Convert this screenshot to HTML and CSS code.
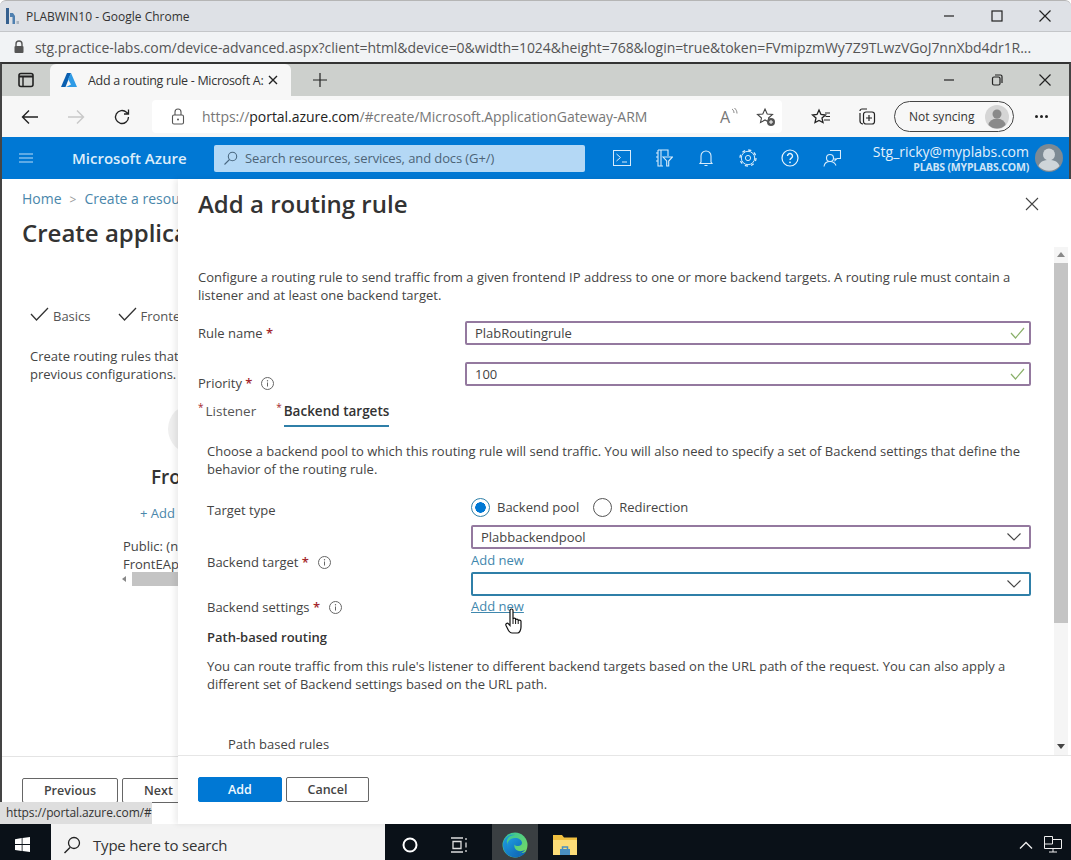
FILE: index.html
```html
<!DOCTYPE html>
<html lang="en">
<head>
    <meta charset="UTF-8">
    <title>Add a routing rule - Microsoft Azure</title>
    <link rel="stylesheet" href="styles.css">
</head>
<body>
<div class="screen">
    <div class="outerTitle">
        <svg class="labIcon" width="14" height="20" viewBox="0 0 14 20"><path d="M1 2h3v16H1z" fill="#35608f"/><path d="M5 7h3l2 3v8H7.500v-7H5z" fill="#4f80b0"/><path d="M11.500 15H14v3h-2.500z" fill="#aab4bf"/></svg>
        <span class="outerName">PLABWIN10 - Google Chrome</span>
        <div class="winButtons">
            <svg width="16" height="16" viewBox="0 0 16 16"><path d="M3 8h10" stroke="#222" stroke-width="1.2"/></svg>
            <svg width="16" height="16" viewBox="0 0 16 16"><rect x="3" y="3" width="10" height="10" fill="none" stroke="#222" stroke-width="1.2"/></svg>
            <svg width="16" height="16" viewBox="0 0 16 16"><path d="M2.500 2.500l11 11M13.500 2.500l-11 11" stroke="#222" stroke-width="1.2"/></svg>
        </div>
    </div>
    <div class="outerAddress">
        <svg width="12" height="14" viewBox="0 0 12 14"><path d="M3 6V4a3 3 0 0 1 6 0v2" fill="none" stroke="#555" stroke-width="1.4"/><rect x="1.500" y="6" width="9" height="7" rx="1" fill="#555"/></svg>
        <span class="outerUrl">stg.practice-labs.com/device-advanced.aspx?client=html&amp;device=0&amp;width=1024&amp;height=768&amp;login=true&amp;token=FVmipzmWy7Z9TLwzVGoJ7nnXbd4dr1R...</span>
    </div>

    <div class="browser">
        <div class="tabStrip">
            <svg class="sideIcon" width="16" height="16" viewBox="0 0 16 16"><rect x="1" y="1.500" width="14" height="13" rx="2" fill="none" stroke="#222" stroke-width="1.6"/><path d="M1 4.500h14" stroke="#222" stroke-width="2"/><path d="M5 4.500v10" stroke="#222" stroke-width="1.4"/></svg>
            <div class="tab">
                <svg width="16" height="14" viewBox="0 0 16 14"><path d="M6 0h4L4.500 14H0z" fill="#0a5fb0"/><path d="M10 0l6 14H5l5-2.500L7 6z" fill="#2f9be6"/></svg>
                <span class="tabTitle">Add a routing rule - Microsoft A:</span>
                <svg width="10" height="10" viewBox="0 0 10 10"><path d="M1 1l8 8M9 1L1 9" stroke="#222" stroke-width="1.4"/></svg>
            </div>
            <svg class="plusIcon" width="14" height="14" viewBox="0 0 14 14"><path d="M7 0v14M0 7h14" stroke="#222" stroke-width="1.2"/></svg>
            <div class="winButtons">
                <svg width="16" height="16" viewBox="0 0 16 16"><path d="M3 8h10" stroke="#222" stroke-width="1.2"/></svg>
                <svg width="16" height="16" viewBox="0 0 16 16"><rect x="3.500" y="5" width="7.500" height="8" rx="1.500" fill="none" stroke="#222" stroke-width="1.2"/><path d="M6 3h5.500a1.500 1.500 0 0 1 1.500 1.500V11" fill="none" stroke="#222" stroke-width="1.2"/></svg>
                <svg width="16" height="16" viewBox="0 0 16 16"><path d="M2.500 2.500l11 11M13.500 2.500l-11 11" stroke="#222" stroke-width="1.2"/></svg>
            </div>
        </div>

        <div class="toolbar">
            <svg class="navIcon" width="18" height="16" viewBox="0 0 18 16"><path d="M17 8H1.500M8 1.500L1.500 8 8 14.500" fill="none" stroke="#222" stroke-width="1.400"/></svg>
            <svg class="navIcon" width="18" height="16" viewBox="0 0 18 16"><path d="M1 8h15.500M10 1.500L16.500 8 10 14.500" fill="none" stroke="#c9c9c9" stroke-width="1.400"/></svg>
            <svg class="navIcon" width="18" height="18" viewBox="0 0 18 18"><path d="M15.500 9a6.500 6.500 0 1 1-2-4.700L15.500 6M15.500 1.500V6H11" fill="none" stroke="#222" stroke-width="1.300"/></svg>
            <div class="urlBox">
                <svg width="14" height="17" viewBox="0 0 14 17"><path d="M4 7V4a3 3 0 0 1 6 0v3" fill="none" stroke="#555" stroke-width="1.100"/><rect x="1.500" y="7" width="11" height="9" rx="1.500" fill="none" stroke="#555" stroke-width="1.100"/><circle cx="7" cy="11.500" r="1" fill="#555"/></svg>
                <span class="urlText">https://<b>portal.azure.com</b>/#create/Microsoft.ApplicationGateway-ARM</span>
                <span class="readAloud">A</span>
                <svg class="readWaves" width="7" height="12" viewBox="0 0 7 12"><path d="M1 1c1.500 1 2 2.500 2 4M3.500 0C5 1.500 6 3 6 5.500" fill="none" stroke="#888"/></svg>
                <svg class="favAdd" width="20" height="20" viewBox="0 0 20 20"><path d="M9 2l2.200 5 5.300.5-4 3.500 1 4.500-4.500-2.500L4.500 15.500l1-4.500-4-3.500L6.800 7z" fill="none" stroke="#444" stroke-width="1.100"/><circle cx="15" cy="15" r="4" fill="#555"/><path d="M15 13v4M13 15h4" stroke="#fff"/></svg>
            </div>
            <svg class="toolIcon favIcon" width="20" height="18" viewBox="0 0 20 18"><path d="M8 2l2 4.500 4.500.5-3.500 3 1 4.500L8 12.500 4 14.500l1-4.500-3.500-3 4.500-.5z" fill="none" stroke="#222" stroke-width="1.300"/><path d="M14 5h5M14.500 8.500h4.500M13 12h6" stroke="#222" stroke-width="1.100"/></svg>
            <svg class="toolIcon" width="20" height="20" viewBox="0 0 20 20"><path d="M6 17a3 3 0 0 1-3-3V6M3 4a2 2 0 0 1 2-2h5" fill="none" stroke="#222" stroke-width="1.200"/><rect x="6.500" y="5" width="11" height="12" rx="2.500" fill="none" stroke="#222" stroke-width="1.200"/><path d="M12 8v6M9 11h6" stroke="#222" stroke-width="1.200"/></svg>
            <div class="syncPill">
                <span>Not syncing</span>
                <svg width="24" height="24" viewBox="0 0 24 24"><circle cx="12" cy="12" r="12" fill="#d5d5d5"/><circle cx="12" cy="9" r="4.500" fill="#8a8a8a"/><path d="M3.500 20a8.500 6.500 0 0 1 17 0 12 12 0 0 1-17 0z" fill="#8a8a8a"/></svg>
            </div>
            <div class="moreDots"><i></i><i></i><i></i></div>
        </div>

        <div class="portalBar">
            <svg class="burger" width="14" height="10" viewBox="0 0 14 10"><path d="M0 1h14M0 5h14M0 9h14" stroke="#bcdcf5" stroke-width="1.200"/></svg>
            <span class="brand">Microsoft Azure</span>
            <div class="portalSearch">
                <svg width="15" height="15" viewBox="0 0 15 15"><circle cx="9.500" cy="5.500" r="4.200" fill="none" stroke="#4a6880" stroke-width="1.100"/><path d="M6.500 8.500L1.500 13.500" stroke="#4a6880" stroke-width="1.100"/></svg>
                <span>Search resources, services, and docs (G+/)</span>
            </div>
            <div class="portalIcons">
                <svg width="18" height="16" viewBox="0 0 18 16"><rect x=".5" y=".5" width="17" height="15" fill="none" stroke="#d8ecfb"/><path d="M3.500 4l4 3.500-4 3.500M9 12h5" fill="none" stroke="#d8ecfb"/></svg>
                <svg width="18" height="18" viewBox="0 0 18 18"><path d="M3 1h10v6M8 17H3V1M1 4h2M1 8h2M1 12h2M6 1v16" fill="none" stroke="#d8ecfb" stroke-width="1.100"/><path d="M8 8h9.500l-3.800 4v5h-2v-5z" fill="none" stroke="#d8ecfb" stroke-width="1.100"/></svg>
                <svg width="18" height="18" viewBox="-2 0 18 18"><path d="M2 13V7a5 5 0 0 1 10 0v6l1 1.500H1zM5.500 16.500h3" fill="none" stroke="#d8ecfb" stroke-width="1.100"/></svg>
                <svg width="18" height="18" viewBox="0 0 18 18"><circle cx="9" cy="9" r="8" fill="none" stroke="#d8ecfb" stroke-width="1.300" stroke-dasharray="3.140 3.140"/><circle cx="9" cy="9" r="6.700" fill="#0078d4" stroke="#d8ecfb" stroke-width="1"/><circle cx="9" cy="9" r="2.600" fill="none" stroke="#d8ecfb" stroke-width="1"/></svg>
                <svg width="18" height="18" viewBox="0 0 18 18"><circle cx="9" cy="9" r="8" fill="none" stroke="#e8f4fd" stroke-width="1.200"/><path d="M6.500 7a2.500 2.500 0 1 1 3.800 2.100C9.400 9.700 9 10.200 9 11" fill="none" stroke="#e8f4fd" stroke-width="1.400"/><circle cx="9" cy="13.300" r=".9" fill="#e8f4fd"/></svg>
                <svg width="18" height="18" viewBox="0 0 18 18"><circle cx="7" cy="9" r="3.500" fill="none" stroke="#d8ecfb" stroke-width="1.100"/><path d="M1 17.500c.5-3.500 3-5 6-5s5 1.500 6 4M7 1.500h10.500v8h-3.500l-2 2V9" fill="none" stroke="#d8ecfb" stroke-width="1.100"/></svg>
            </div>
            <div class="account">
                <span class="accountMail">Stg_ricky@myplabs.com</span>
                <span class="accountOrg">PLABS (MYPLABS.COM)</span>
            </div>
            <svg class="avatar" width="28" height="28" viewBox="0 0 28 28"><circle cx="14" cy="14" r="14" fill="#7d8a94"/><circle cx="14" cy="10.500" r="6" fill="#cfd5d9"/><path d="M3.500 22c1.500-4.500 5.500-6 10.500-6s9 1.500 10.500 6a14 14 0 0 1-21 0z" fill="#cfd5d9"/></svg>
        </div>

        <div class="portalMain">
            <div class="blade">
                <div class="crumbs"><a>Home</a><span class="crumbSep">&gt;</span><a>Create a resou</a></div>
                <h1 class="bladeTitle">Create applica</h1>
                <div class="steps">
                    <span class="step"><svg width="19" height="14" viewBox="0 0 19 14"><path d="M1 7l5.500 6L18 1" fill="none" stroke="#333" stroke-width="1.300"/></svg>Basics</span>
                    <span class="step"><svg width="19" height="14" viewBox="0 0 19 14"><path d="M1 7l5.500 6L18 1" fill="none" stroke="#333" stroke-width="1.300"/></svg>Fronte</span>
                </div>
                <p class="bladeText">Create routing rules that<br>previous configurations.</p>
                <div class="bladeCircle"></div>
                <div class="bladeCol">
                    <div class="colTitle">Fro</div>
                    <div class="colAdd">+ Add</div>
                    <div class="colItem">Public: (n<br>FrontEAp</div>
                    <div class="colScroll"><span class="colArrow"></span><span class="colThumb"></span></div>
                </div>
                <div class="bladeFooter">
                    <button class="btn">Previous</button>
                    <button class="btn btnNext">Next</button>
                </div>
            </div>

            <div class="panel">
                <div class="panelHead">
                    <h2>Add a routing rule</h2>
                    <svg width="14" height="14" viewBox="0 0 14 14"><path d="M1 1l12 12M13 1L1 13" stroke="#444" stroke-width="1.100"/></svg>
                </div>
                <div class="panelBody">
                    <div class="panelScroll">
                        <p class="intro">Configure a routing rule to send traffic from a given frontend IP address to one or more backend targets. A routing rule must contain a listener and at least one backend target.</p>

                        <div class="formRow ruleRow">
                            <label>Rule name <em>*</em></label>
                            <div class="field valid"><span>PlabRoutingrule</span><svg width="15" height="12" viewBox="0 0 15 12"><path d="M1 6l4.500 5L14 1" fill="none" stroke="#8ab06a" stroke-width="1.200"/></svg></div>
                        </div>
                        <div class="formRow priorityRow">
                            <label>Priority <em>*</em><svg class="info" width="13" height="13" viewBox="0 0 13 13"><circle cx="6.500" cy="6.500" r="6" fill="none" stroke="#666"/><path d="M6.500 5.500v4" stroke="#666"/><circle cx="6.500" cy="3.700" r=".7" fill="#666"/></svg></label>
                            <div class="field valid"><span>100</span><svg width="15" height="12" viewBox="0 0 15 12"><path d="M1 6l4.500 5L14 1" fill="none" stroke="#8ab06a" stroke-width="1.200"/></svg></div>
                        </div>

                        <div class="tabs">
                            <span class="formTab"><sup>*</sup>Listener</span>
                            <span class="formTab formTabOn"><sup>*</sup><b>Backend targets</b></span>
                        </div>

                        <div class="tabBody">
                            <p class="tabIntro">Choose a backend pool to which this routing rule will send traffic. You will also need to specify a set of Backend settings that define the behavior of the routing rule.</p>

                            <div class="targetGrid">
                                <div class="targetLabels">
                                    <label class="labelType">Target type</label>
                                    <label class="labelTarget">Backend target <em>*</em><svg class="info" width="13" height="13" viewBox="0 0 13 13"><circle cx="6.500" cy="6.500" r="6" fill="none" stroke="#666"/><path d="M6.500 5.500v4" stroke="#666"/><circle cx="6.500" cy="3.700" r=".7" fill="#666"/></svg></label>
                                    <label class="labelSettings">Backend settings <em>*</em><svg class="info" width="13" height="13" viewBox="0 0 13 13"><circle cx="6.500" cy="6.500" r="6" fill="none" stroke="#666"/><path d="M6.500 5.500v4" stroke="#666"/><circle cx="6.500" cy="3.700" r=".7" fill="#666"/></svg></label>
                                </div>
                                <div class="targetControls">
                                    <div class="radios">
                                        <span class="radio radioOn"></span><span class="radioText">Backend pool</span>
                                        <span class="radio"></span><span class="radioText">Redirection</span>
                                    </div>
                                    <div class="field select"><span>Plabbackendpool</span><svg width="14" height="8" viewBox="0 0 14 8"><path d="M.5.500L7 7 13.500.500" fill="none" stroke="#444" stroke-width="1.100"/></svg></div>
                                    <a class="addNew">Add new</a>
                                    <div class="field select focused"><span></span><svg width="14" height="8" viewBox="0 0 14 8"><path d="M.5.500L7 7 13.500.500" fill="none" stroke="#444" stroke-width="1.100"/></svg></div>
                                    <a class="addNew addHover">Add new
                                        <svg class="handCursor" width="18" height="26" viewBox="0 0 18 26"><path d="M5 2.500c0-2 3-2 3 0V11c0-1.300 2.600-1.300 2.600 0v1c0-1.300 2.600-1.300 2.600 0v1c0-1.200 2.800-1.200 2.800 .3V19c0 3-1.500 6-3.500 6H7c-1.500 0-2.500-1-3.500-2.500L1 17.500c-.8-1.800 1.300-3 2.500-1.700L5 17.500z" fill="#fff" stroke="#111" stroke-width="1.200"/><path d="M8 11v5M10.600 12v4M13.200 13v3" stroke="#111"/></svg>
                                    </a>
                                </div>
                            </div>

                            <h3 class="pathTitle">Path-based routing</h3>
                            <p class="pathText">You can route traffic from this rule's listener to different backend targets based on the URL path of the request. You can also apply a different set of Backend settings based on the URL path.</p>
                            <div class="pathRules">Path based rules</div>
                        </div>
                    </div>
                    <div class="scrollbar">
                        <span class="arrowUp"></span>
                        <span class="thumb"></span>
                        <span class="track"></span>
                        <span class="arrowDown"></span>
                    </div>
                </div>
                <div class="panelFooter">
                    <button class="btn btnPrimary">Add</button>
                    <button class="btn btnCancel">Cancel</button>
                </div>
            </div>

            <div class="statusBubble">https://portal.azure.com/#</div>
        </div>
    </div>

    <div class="taskbar">
        <div class="startBtn">
            <svg width="15" height="15" viewBox="0 0 15 15"><path d="M0 2.200L6.700 1v6H0zM7.500.900L15 0v7H7.500zM0 8h6.700v6L0 13zM7.500 8H15v7l-7.500-1z" fill="#fff"/></svg>
        </div>
        <div class="taskSearch">
            <svg width="18" height="18" viewBox="0 0 18 18"><circle cx="11" cy="7" r="5.500" fill="none" stroke="#222" stroke-width="1.300"/><path d="M7 11.500L1.500 17" stroke="#222" stroke-width="1.500"/></svg>
            <span>Type here to search</span>
        </div>
        <div class="taskApps">
            <svg class="taskCortana" width="16" height="16" viewBox="0 0 16 16"><circle cx="8" cy="8" r="6.500" fill="none" stroke="#fff" stroke-width="2"/></svg>
            <svg class="taskView" width="18" height="16" viewBox="0 0 18 16"><path d="M1 1h12M1 15h12M3 4.500h8v7H3zM16 1v2M16 5.500v5M16 13v2" fill="none" stroke="#ddd" stroke-width="1.300"/></svg>
            <div class="taskEdge">
                <svg width="26" height="26" viewBox="0 0 26 26">
                    <defs>
                        <linearGradient id="edgeA" x1="0" y1="0" x2="1" y2="1"><stop offset="0" stop-color="#2fc3a0"/><stop offset="1" stop-color="#7ddc5c"/></linearGradient>
                        <linearGradient id="edgeB" x1="0" y1="0" x2="1" y2="1"><stop offset="0" stop-color="#1f9ee0"/><stop offset="1" stop-color="#0d5fb0"/></linearGradient>
                    </defs>
                    <circle cx="13" cy="13" r="12.500" fill="url(#edgeA)"/>
                    <path d="M1 12C2 6 7 2 13 3c-6 0-9 4-8 8 1 6 8 11 15 10 2-.3 3.500-1 4-1.500C22 23 18 25.500 13 25.500 6 25.500.5 19 1 12z" fill="url(#edgeB)"/>
                    <path d="M5 14c0-5 4-8 8-8s7 2 7 5c0 2-2 3-4 3-1.500 0-3-.5-3.500-1.500-.3 1.500-.3 3 1 4.500 2 2.500 6 3 10 .5-2 3-6 5-10 4.500C8 21.500 5 18 5 14z" fill="url(#edgeB)"/>
                </svg>
            </div>
            <svg class="taskFolder" width="24" height="22" viewBox="0 0 24 22"><path d="M0 1h9l2 2.500h13V21H0z" fill="#f0c040"/><path d="M0 6h24v15H0z" fill="#fbdc78"/><path d="M7 15h10v6H7z" fill="#4a8fc0"/><path d="M9.500 15v-2h5v2" fill="none" stroke="#4a8fc0" stroke-width="1.500"/></svg>
        </div>
        <div class="tray">
            <svg width="14" height="8" viewBox="0 0 14 8"><path d="M1 7.500L7 1.500l6 6" fill="none" stroke="#eee" stroke-width="1.300"/></svg>
            <svg width="18" height="17" viewBox="0 0 18 17"><path d="M.5.500h8v3h9v9h-17zM8.500 3.500V8H.5M9 13v3M5 16h8" fill="none" stroke="#eee"/></svg>
        </div>
    </div>
</div>
</body>
</html>
```

FILE: styles.css
```css
* {
    box-sizing: border-box;
}
html, body {
    margin: 0;
    height: 100%;
    overflow: hidden;
}
body {
    font-family: 'Open Sans', 'Noto Sans', sans-serif;
    font-size: 13px;
    color: #444;
    background-color: #fff;
}
p, h1, h2, h3 {
    margin: 0;
}
.screen {
    height: 860px;
    display: flex;
    flex-direction: column;
}

/* outer chrome window */
.outerTitle {
    height: 32px;
    flex: none;
    background-color: #dee1e6;
    border-top: 1px solid #b5b5b5;
    border-bottom: 1px solid #c4c6c9;
    display: flex;
    align-items: center;
    padding-left: 5px;
    border-radius: 6px 6px 0 0;
}
.labIcon {
    margin-right: 7px;
}
.outerName {
    font-size: 12px;
    color: #333;
}
.winButtons {
    margin-left: auto;
    display: flex;
    gap: 32px;
    padding-right: 18px;
}
.tabStrip .winButtons {
    padding-right: 16px;
}
.outerAddress {
    height: 30px;
    flex: none;
    background-color: #f1f3f5;
    display: flex;
    align-items: center;
    gap: 10px;
    padding-left: 13px;
}
.outerUrl {
    font-size: 14px;
    letter-spacing: -0.05px;
    color: #555;
    white-space: nowrap;
}

/* inner browser */
.browser {
    flex: 1;
    min-height: 0;
    display: flex;
    flex-direction: column;
    border-top: 2px solid #333;
    border-left: 2px solid #444;
    border-right: 2px solid #444;
}
.tabStrip {
    height: 32px;
    flex: none;
    background-color: #cdd0cd;
    display: flex;
    align-items: center;
}
.sideIcon {
    margin-left: 16px;
}
.tab {
    width: 241px;
    height: 32px;
    margin: 0 0 0 16px;
    background-color: #f7f7f7;
    border-radius: 6px 6px 0 0;
    display: flex;
    align-items: center;
    padding-left: 11px;
    gap: 11px;
}
.tabTitle {
    width: 176px;
    margin-right: -7px;
    font-size: 12.5px;
    letter-spacing: -0.3px;
    color: #333;
    white-space: nowrap;
    overflow: hidden;
}
.plusIcon {
    margin-left: 22px;
}
.toolbar {
    height: 41px;
    flex: none;
    background-color: #f7f7f7;
    display: flex;
    align-items: center;
    padding-left: 19px;
}
.navIcon {
    margin-right: 28px;
}
.urlBox {
    width: 630px;
    height: 33px;
    margin-left: -7px;
    background-color: #fff;
    border-radius: 4px;
    display: flex;
    align-items: center;
    padding-left: 19px;
}
.urlText {
    margin-left: 17px;
    width: 518px;
    font-size: 14px;
    letter-spacing: -0.05px;
    color: #777;
    white-space: nowrap;
}
.urlText b {
    font-weight: 400;
    color: #222;
}
.readAloud {
    font-size: 16px;
    color: #777;
}
.readWaves {
    margin: 0 0 6px 1px;
}
.favAdd {
    margin-left: 18px;
}
.toolIcon {
    margin-left: 26px;
}
.favIcon {
    margin-left: 29px;
}
.syncPill {
    width: 120px;
    height: 31px;
    margin-left: 17px;
    border: 1.5px solid #444;
    border-radius: 16px;
    display: flex;
    align-items: center;
    justify-content: space-between;
    padding: 0 4px 0 14px;
    font-size: 12px;
    color: #333;
}
.moreDots {
    display: flex;
    gap: 2px;
    margin-left: 21px;
}
.moreDots i {
    width: 3px;
    height: 3px;
    border-radius: 50%;
    background-color: #222;
}
.portalBar {
    height: 42px;
    flex: none;
    background-color: #0078d4;
    display: flex;
    align-items: center;
    color: #fff;
}
.burger {
    margin-left: 17px;
}
.brand {
    margin-left: 39px;
    width: 142px;
    font-size: 15px;
    font-weight: 600;
    color: #dcedfa;
}
.portalSearch {
    width: 371px;
    height: 27px;
    background-color: #b4d8f5;
    border-radius: 2px;
    display: flex;
    align-items: center;
    gap: 7px;
    padding-left: 9px;
    font-size: 13px;
    letter-spacing: -0.1px;
    color: #4d6477;
}
.portalIcons {
    display: flex;
    align-items: center;
    gap: 24px;
    margin-left: 28px;
}
.account {
    margin-left: auto;
    display: flex;
    flex-direction: column;
    align-items: flex-end;
    margin-right: 6px;
}
.accountMail {
    font-size: 14px;
    line-height: 17px;
    color: #e3f1fc;
}
.accountOrg {
    font-size: 10.5px;
    line-height: 14px;
    font-weight: 700;
    letter-spacing: -0.2px;
    color: #cfe5f7;
}
.avatar {
    margin-right: 6px;
}

/* portal content, the blade is cut off by the panel over it */
.portalMain {
    position: relative;
    flex: 1;
    min-height: 0;
    background-color: #fff;
}
.blade {
    height: 100%;
    display: flex;
    flex-direction: column;
    padding-left: 20px;
    white-space: nowrap;
    overflow: hidden;
}
.crumbs {
    margin-top: 11px;
    font-size: 14px;
    line-height: 18px;
    color: #4a87ab;
}
.crumbSep {
    margin: 0 8px;
    color: #999;
    font-size: 12px;
}
.bladeTitle {
    margin-top: 9px;
    font-size: 24px;
    line-height: 30px;
    font-weight: 600;
    color: #333;
}
.steps {
    margin-top: 59px;
    display: flex;
    gap: 27px;
    margin-left: 8px;
    line-height: 18px;
    font-size: 13px;
    color: #555;
}
.step svg {
    margin-right: 4px;
}
.bladeText {
    margin: 22px 0 0 8px;
    line-height: 18px;
    color: #444;
}
.bladeCircle {
    position: absolute;
    left: 166px;
    top: 225px;
    width: 50px;
    height: 50px;
    border-radius: 50%;
    background-color: #efefef;
}
.bladeCol {
    margin: 81px 0 0 101px;
    width: 200px;
}
.colTitle {
    margin-left: 28px;
    font-size: 19px;
    line-height: 26px;
    font-weight: 600;
    color: #333;
}
.colAdd {
    margin: 14px 0 0 17px;
    font-size: 13px;
    line-height: 18px;
    color: #4a87ab;
}
.colItem {
    margin-top: 15px;
    line-height: 18px;
    color: #444;
}
.colScroll {
    display: flex;
    align-items: center;
    margin: -1px 0 0 -5px;
    height: 14px;
}
.colArrow {
    width: 0;
    height: 0;
    margin: 0 6px 0 4px;
    border: 3px solid transparent;
    border-right: 4px solid #888;
    border-left: 0;
}
.colThumb {
    width: 60px;
    height: 14px;
    background-color: #c4c4c4;
}
.bladeFooter {
    margin-top: auto;
    height: 68px;
    margin-left: -20px;
    padding: 21px 0 0 20px;
    border-top: 1px solid #e4e4e4;
    display: flex;
    gap: 4px;
}
.btn {
    width: 96px;
    height: 25px;
    background-color: #fff;
    border: 1px solid #666;
    border-radius: 2px;
    font-family: inherit;
    font-size: 12.5px;
    font-weight: 600;
    color: #444;
    padding: 0;
}
.btnNext {
    width: 73px;
}

/* routing rule panel */
.panel {
    position: absolute;
    left: 176px;
    top: 0;
    right: -2px;
    bottom: 0;
    background-color: #fff;
    box-shadow: -3px 0 6px rgba(0, 0, 0, 0.08);
    display: flex;
    flex-direction: column;
}
.panelHead {
    height: 68px;
    flex: none;
    display: flex;
    align-items: flex-start;
    justify-content: space-between;
    padding: 8px 32px 0 20px;
}
.panelHead h2 {
    font-size: 24px;
    line-height: 34px;
    font-weight: 600;
    color: #333;
}
.panelHead svg {
    margin-top: 10px;
}
.panelBody {
    flex: 1;
    min-height: 0;
    display: flex;
    border-bottom: 1px solid #e6e6e6;
}
.panelScroll {
    flex: 1;
    min-width: 0;
    overflow: hidden;
    padding: 21px 23px 0 20px;
}
.intro {
    line-height: 18px;
}
.formRow {
    display: flex;
    align-items: flex-start;
    height: 24px;
}
.formRow label {
    width: 267px;
    flex: none;
    line-height: 18px;
}
em {
    font-style: normal;
    color: #a4262c;
    font-weight: 600;
}
.info {
    margin-left: 9px;
    vertical-align: -2px;
}
.ruleRow {
    margin-top: 17px;
}
.ruleRow label {
    margin-top: 3px;
}
.priorityRow {
    margin-top: 17px;
}
.priorityRow label {
    margin-top: 12px;
}
.field {
    flex: 1;
    height: 24px;
    background-color: #fff;
    border: 2px solid #94799f;
    border-radius: 2px;
    display: flex;
    align-items: center;
    justify-content: space-between;
    padding: 0 4px 0 8px;
    color: #444;
}
.field.select {
    flex: none;
    padding-right: 8px;
}
.field.focused {
    margin-top: 1px;
    border-color: #2f7fa8;
}
.tabs {
    margin-top: 12px;
    height: 29px;
    display: flex;
    gap: 20px;
}
.formTab {
    line-height: 26px;
    color: #555;
    font-size: 13.5px;
    position: relative;
}
.formTab sup {
    color: #a4262c;
    font-size: 10px;
    line-height: 0;
    margin-right: 2px;
}
.formTab b {
    font-weight: 600;
    color: #333;
}
.formTabOn::after {
    content: "";
    position: absolute;
    left: 8px;
    right: 0;
    bottom: 0;
    height: 2px;
    background-color: #2f7fa8;
}
.tabBody {
    padding-left: 9px;
}
.tabIntro {
    margin-top: 15px;
    line-height: 18px;
}
.targetGrid {
    display: flex;
    margin-top: 16px;
}
.targetLabels {
    width: 264px;
    flex: none;
    display: flex;
    flex-direction: column;
}
.targetLabels label {
    line-height: 18px;
}
.labelType {
    margin-top: 7px;
}
.labelTarget {
    margin-top: 34px;
}
.labelSettings {
    margin-top: 27px;
}
.targetControls {
    flex: 1;
    display: flex;
    flex-direction: column;
}
.radios {
    height: 31px;
    padding-bottom: 5px;
    display: flex;
    align-items: center;
}
.radio {
    width: 19px;
    height: 19px;
    border-radius: 50%;
    border: 1px solid #555;
    background-color: #fff;
    margin-right: 7px;
}
.radioOn {
    border-color: #2f7fa8;
    background: radial-gradient(circle, #0078d4 0 5px, #fff 5.500px);
}
.radioText {
    margin-right: 14px;
    line-height: 18px;
}
.addNew {
    line-height: 22px;
    color: #3f87ad;
    align-self: flex-start;
}
.addHover {
    position: relative;
    margin-top: -1px;
    text-decoration: underline;
}
.handCursor {
    position: absolute;
    left: 34px;
    top: 13px;
}
.pathTitle {
    margin-top: 11px;
    font-size: 13px;
    line-height: 18px;
    font-weight: 600;
    color: #333;
}
.pathText {
    margin-top: 11px;
    line-height: 18px;
}
.pathRules {
    margin: 42px 0 0 21px;
    line-height: 18px;
}
.scrollbar {
    width: 14px;
    flex: none;
    margin: 0 3px 0 0;
    display: flex;
    flex-direction: column;
    background-color: #f5f5f5;
}
.arrowUp, .arrowDown {
    height: 16px;
    flex: none;
    position: relative;
}
.arrowUp::after, .arrowDown::after {
    content: "";
    position: absolute;
    left: 3px;
    top: 5px;
    border: 4px solid transparent;
}
.arrowUp::after {
    border-bottom: 5px solid #888;
    border-top: 0;
}
.arrowDown::after {
    border-top: 5px solid #444;
    border-bottom: 0;
}
.thumb {
    height: 360px;
    flex: none;
    background-color: #c4c4c4;
}
.track {
    flex: 1;
}
.panelFooter {
    height: 68px;
    flex: none;
    display: flex;
    gap: 4px;
    padding: 21px 0 0 20px;
}
.btnPrimary {
    width: 84px;
    background-color: #0078d4;
    border-color: #0078d4;
    color: #f1f8fe;
}
.btnCancel {
    width: 83px;
}
.statusBubble {
    position: absolute;
    left: -2px;
    bottom: 0;
    width: 152px;
    height: 22px;
    background-color: #dedede;
    padding-left: 6px;
    font-size: 12px;
    letter-spacing: -0.1px;
    line-height: 21px;
    color: #333;
}

/* windows taskbar */
.taskbar {
    height: 36px;
    flex: none;
    background-color: #0a1118;
    display: flex;
    align-items: stretch;
}
.startBtn {
    width: 51px;
    display: flex;
    align-items: center;
    padding: 5px 0 0 15px;
}
.taskSearch {
    width: 334px;
    background-color: #f3f3f3;
    display: flex;
    align-items: center;
    padding: 5px 0 0 12px;
    gap: 12px;
    font-size: 15px;
    letter-spacing: -0.2px;
    color: #333;
}
.taskApps {
    display: flex;
    align-items: center;
}
.taskCortana {
    margin: 5px 0 0 17px;
}
.taskView {
    margin: 5px 0 0 32px;
}
.taskEdge {
    width: 46px;
    height: 36px;
    margin-left: 24px;
    padding-top: 5px;
    background-color: #3a3f42;
    display: flex;
    align-items: center;
    justify-content: center;
}
.taskFolder {
    margin: 5px 0 0 15px;
}
.tray {
    margin-left: auto;
    display: flex;
    align-items: center;
    gap: 11px;
    padding: 5px 9px 0 0;
}
```
